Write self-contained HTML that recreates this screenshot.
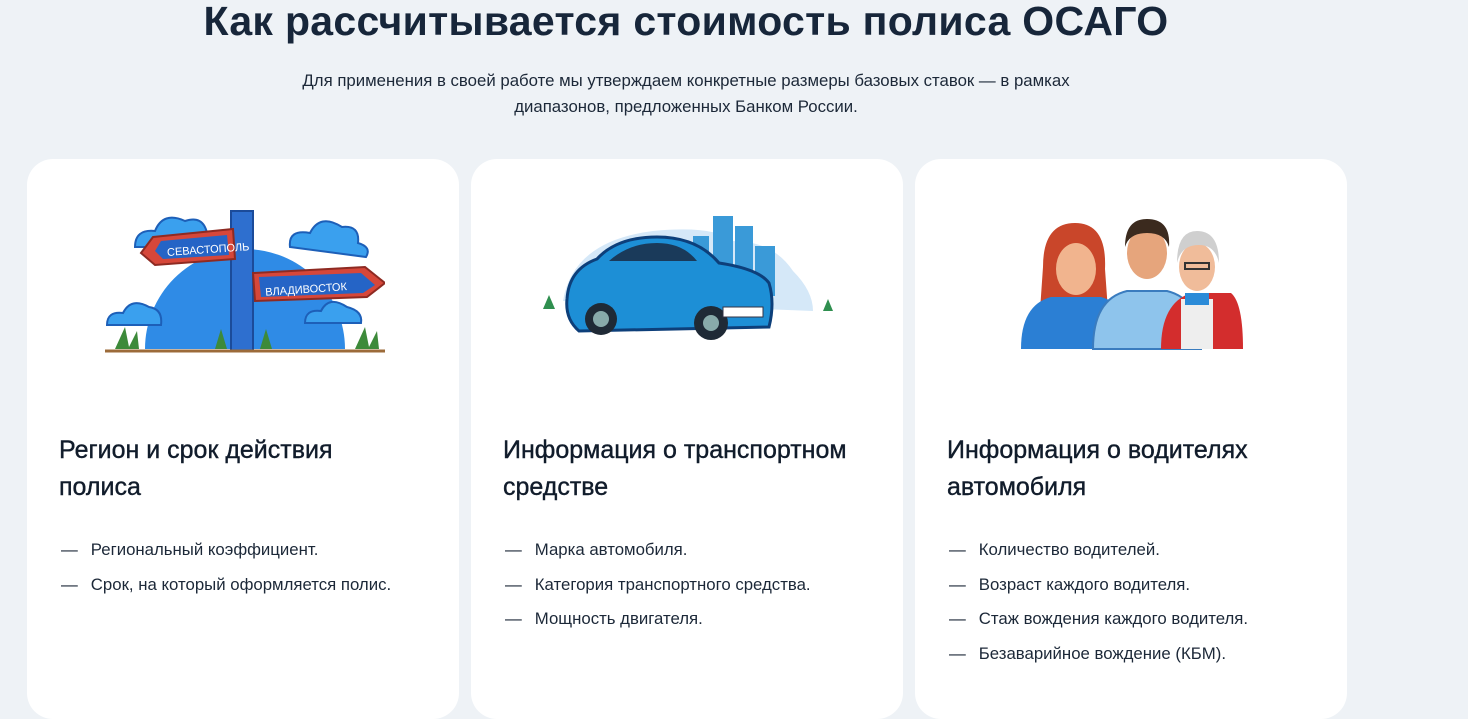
<!DOCTYPE html>
<html><head><meta charset="utf-8"><style>
*{margin:0;padding:0;box-sizing:border-box}
body{width:1468px;height:664px;overflow:hidden;background:#eef2f6;font-family:"Liberation Sans",sans-serif;color:#111c2b;position:relative}
h1{position:absolute;top:-2px;left:0;width:1372px;text-align:center;font-size:41px;font-weight:700;color:#17263a;letter-spacing:0.3px}
.sub{position:absolute;top:68px;left:236px;width:900px;text-align:center;font-size:16.8px;line-height:26px;color:#1c2838}
.card{position:absolute;top:159px;width:432px;height:560px;background:#fff;border-radius:26px}
.card svg{position:absolute}
.card h2{position:absolute;left:32px;top:273px;font-size:25px;font-weight:400;line-height:37px;color:#111c2b;width:360px;-webkit-text-stroke:0.4px #111c2b}
.card ul{position:absolute;left:34px;top:374px;list-style:none;font-size:16.8px;line-height:34.5px;color:#1c2838}
.card li:before{content:"—";margin-right:13px}
</style></head><body>
<h1>Как рассчитывается стоимость полиса ОСАГО</h1>
<div class="sub">Для применения в своей работе мы утверждаем конкретные размеры базовых ставок — в рамках<br>диапазонов, предложенных Банком России.</div>

<div class="card" style="left:27px">
<svg style="left:78px;top:48px" width="280" height="146" viewBox="0 0 280 146">
<path d="M40 142 A100 100 0 0 1 240 142Z" fill="#2f8be6"/>
<g fill="#3aa0ee" stroke="#1d5fb8" stroke-width="2">
<path d="M30 40 q0-18 20-16 q8-20 30-10 q18-6 22 12 q14 0 14 14z"/>
<path d="M185 40 q-2-18 20-14 q10-20 32-6 q18-2 16 16 q14 4 8 14z"/>
<path d="M2 118 q0-14 16-12 q8-16 26-6 q14 2 12 18z"/>
<path d="M200 116 q0-14 16-12 q8-16 26-4 q16 4 14 16z"/>
</g>
<rect x="126" y="4" width="22" height="140" fill="#2e6fcf" stroke="#1b4b9a" stroke-width="2"/>
<path d="M48 30 L128 22 L130 52 L50 58 L36 46Z" fill="#d6473a" stroke="#8e2a22" stroke-width="2"/>
<path d="M56 34 L122 28 L124 48 L58 52 L50 44Z" fill="#2564c6"/>
<text x="62" y="47" font-size="11" fill="#fff" font-family="Liberation Sans" transform="rotate(-4 90 44)">СЕВАСТОПОЛЬ</text>
<path d="M148 66 L260 60 L280 76 L262 90 L150 94Z" fill="#d6473a" stroke="#8e2a22" stroke-width="2"/>
<path d="M154 70 L256 66 L270 78 L258 86 L156 90Z" fill="#2564c6"/>
<text x="160" y="86" font-size="11" fill="#fff" font-family="Liberation Sans" transform="rotate(-4 200 80)">ВЛАДИВОСТОК</text>
<path d="M0 144 h280" stroke="#9c6b3a" stroke-width="3"/>
<g fill="#3d8a3a"><path d="M10 142 l10-22 l4 20 l8-16 l2 18z"/><path d="M250 142 l10-22 l4 20 l8-16 l2 18z"/><path d="M110 142 l6-20 l6 20z"/><path d="M155 142 l6-20 l6 20z"/></g>
</svg>
<h2 style="width:300px">Регион и срок действия полиса</h2>
<ul><li>Региональный коэффициент.</li><li>Срок, на который оформляется полис.</li></ul>
</div>

<div class="card" style="left:471px">
<svg style="left:72px;top:52px" width="290" height="130" viewBox="0 0 290 130">
<path d="M20 90 q10-60 90-70 q60-6 80 10 q40 0 60 30 q20 20 20 40z" fill="#d5e8f8"/>
<g fill="#3a9ad8"><rect x="170" y="5" width="20" height="80"/><rect x="192" y="15" width="18" height="70"/><rect x="212" y="35" width="20" height="50"/><rect x="150" y="25" width="16" height="60"/></g>
<path d="M24 88 q2-30 30-40 q20-22 60-22 q40 0 62 26 q40 6 50 20 q6 20 0 44 l-190 4 q-14-12-12-32z" fill="#1d8fd6" stroke="#0d3f7a" stroke-width="3"/>
<path d="M66 50 q20-18 48-18 q26 0 40 18z" fill="#1a3a5a"/>
<circle cx="58" cy="108" r="16" fill="#1f2a36"/><circle cx="58" cy="108" r="8" fill="#8aa"/>
<circle cx="168" cy="112" r="17" fill="#1f2a36"/><circle cx="168" cy="112" r="8" fill="#8aa"/>
<rect x="180" y="96" width="40" height="10" fill="#fff" stroke="#334"/>
<path d="M0 98 l6-14 l6 14z M280 100 l5-12 l5 12z" fill="#2f8f4f"/>
</svg>
<h2>Информация о транспортном средстве</h2>
<ul><li>Марка автомобиля.</li><li>Категория транспортного средства.</li><li>Мощность двигателя.</li></ul>
</div>

<div class="card" style="left:915px">
<svg style="left:106px;top:48px" width="222" height="146" viewBox="0 0 222 146">
<path d="M22 60 q0-44 32-44 q32 0 30 46 l4 56 h-70z" fill="#c9462a"/>
<path d="M0 142 q0-44 30-52 h50 q30 8 30 52z" fill="#2b7fd4"/>
<ellipse cx="55" cy="62" rx="20" ry="26" fill="#f1b48e"/>
<path d="M72 142 q0-50 34-58 h40 q34 8 34 58z" fill="#8ec4ec" stroke="#3a7cbf" stroke-width="2"/>
<ellipse cx="126" cy="46" rx="20" ry="26" fill="#e6a57c"/>
<path d="M104 40 q0-28 22-28 q24 0 22 28 q-4-14-22-14 q-18 0-22 14z" fill="#3b2a1e"/>
<path d="M140 142 q0-46 30-56 h40 q12 10 12 56z" fill="#d32d2d"/>
<path d="M160 142 v-50 h32 v50z" fill="#eee"/>
<ellipse cx="176" cy="60" rx="18" ry="24" fill="#f0bc9a"/>
<path d="M156 56 q0-32 20-32 q22 0 22 32 q-4-18-20-18 q-18 0-22 18z" fill="#cfcfcf"/>
<rect x="164" y="56" width="24" height="6" fill="none" stroke="#333" stroke-width="2"/>
<path d="M164 86 h24 v12 h-24z" fill="#2b8bd8"/>
</svg>
<h2>Информация о водителях автомобиля</h2>
<ul><li>Количество водителей.</li><li>Возраст каждого водителя.</li><li>Стаж вождения каждого водителя.</li><li>Безаварийное вождение (КБМ).</li></ul>
</div>
</body></html>
